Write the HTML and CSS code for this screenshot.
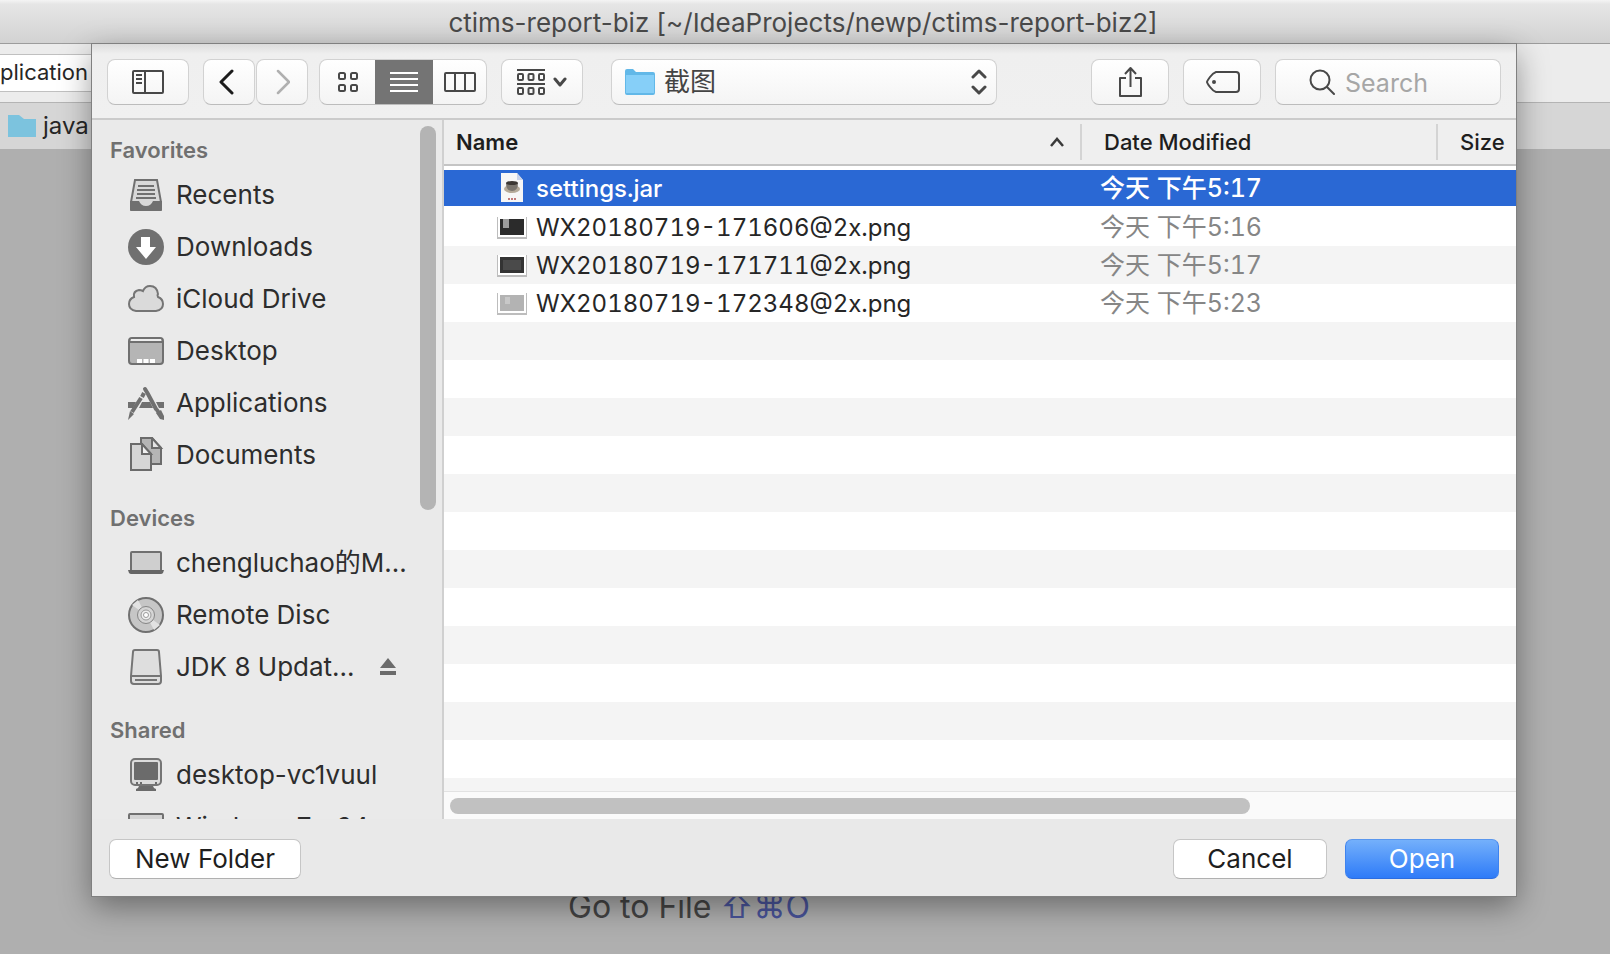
FILE: index.html
```html
<!DOCTYPE html>
<html lang="en">
<head>
<meta charset="utf-8">
<title>ctims-report-biz</title>
<link rel="stylesheet" href="styles.css">
</head>
<body>
<div class="app">
  <header class="titlebar">ctims-report-biz [~/IdeaProjects/newp/ctims-report-biz2]</header>
  <div class="app-tools"><div class="run-config">plication</div></div>
  <nav class="crumbs">
    <svg width="28" height="22" viewBox="0 0 28 22" aria-hidden="true"><path fill="#7cc3de" d="M0 0h11l5 4h12v18H0z"/></svg>
    <span>java</span>
  </nav>
  <main class="editor"><p class="hint">Go to File <kbd>⇧⌘O</kbd></p></main>
</div>

<section class="dialog" role="dialog" aria-label="Open">
  <div class="toolbar">
    <button class="btn btn-side" aria-label="Toggle sidebar">
      <svg width="32" height="24" viewBox="0 0 32 24" fill="none" stroke="#484848" stroke-width="2"><rect x="1" y="1" width="30" height="22" rx="1"/><path d="M13 1v22M4 5h6M4 9h6M4 13h6"/></svg>
    </button>
    <div class="pair">
      <button class="btn btn-nav" aria-label="Back"><svg width="20" height="26" viewBox="0 0 20 26" fill="none" stroke="#1c1c1c" stroke-width="3" stroke-linecap="round" stroke-linejoin="round"><path d="M13 2 2 13l11 11"/></svg></button>
      <button class="btn btn-nav" aria-label="Forward" disabled><svg width="16" height="26" viewBox="0 0 16 26" fill="none" stroke="#b0b0b0" stroke-width="2.5" stroke-linecap="round" stroke-linejoin="round"><path d="m4 2 11 11L4 24"/></svg></button>
    </div>
    <div class="views">
      <button class="view view-icons" aria-label="Icons"><svg width="22" height="22" viewBox="0 0 22 22" fill="none" stroke="#484848" stroke-width="2"><rect x="2" y="2" width="6" height="6" rx="1.5"/><rect x="14" y="2" width="6" height="6" rx="1.5"/><rect x="2" y="14" width="6" height="6" rx="1.5"/><rect x="14" y="14" width="6" height="6" rx="1.5"/></svg></button>
      <button class="view view-on" aria-label="List" aria-pressed="true"><svg width="28" height="20" viewBox="0 0 28 20" stroke="#fff" stroke-width="2"><path d="M0 1h28M0 7h28M0 13h28M0 19h28"/></svg></button>
      <button class="view" aria-label="Columns"><svg width="32" height="20" viewBox="0 0 32 20" fill="none" stroke="#484848" stroke-width="2"><rect x="1" y="1" width="30" height="18" rx="1"/><path d="M11 1v18M21 1v18"/></svg></button>
    </div>
    <button class="btn btn-group" aria-label="Group by">
      <svg width="28" height="28" viewBox="0 0 28 28" fill="none" stroke="#484848" stroke-width="2"><path d="M0 2h28M0 16h28"/><rect x="1" y="6" width="5" height="6" rx="1"/><rect x="11.500" y="6" width="5" height="6" rx="1"/><rect x="22" y="6" width="5" height="6" rx="1"/><rect x="1" y="20" width="5" height="6" rx="1"/><rect x="11.500" y="20" width="5" height="6" rx="1"/><rect x="22" y="20" width="5" height="6" rx="1"/></svg>
      <svg width="14" height="10" viewBox="0 0 14 10" fill="none" stroke="#484848" stroke-width="3" stroke-linecap="round" stroke-linejoin="round"><path d="m2 2 5 6 5-6"/></svg>
    </button>
    <div class="path">
      <svg width="30" height="26" viewBox="0 0 30 26" aria-hidden="true"><path fill="#62b8e8" d="M0 2q0-2 2-2h6l3 3h17q2 0 2 2v19q0 2-2 2H2q-2 0-2-2z"/><path fill="#86cff8" d="M1 6h28v18H1z"/></svg>
      <select aria-label="Folder"><option>截图</option></select>
      <svg width="16" height="26" viewBox="0 0 16 26" fill="none" stroke="#484848" stroke-width="3" stroke-linecap="round" stroke-linejoin="round" aria-hidden="true"><path d="m2 8 6-6 6 6M2 18l6 6 6-6"/></svg>
    </div>
    <button class="btn btn-tool" aria-label="Share"><svg width="24" height="32" viewBox="0 0 24 32" fill="none" stroke="#484848" stroke-width="2" stroke-linejoin="round"><path d="M8 12H2v18h21V12h-6M12.500 21V2M7 8l5.500-6L18 8"/></svg></button>
    <button class="btn btn-tool" aria-label="Tags"><svg width="36" height="22" viewBox="0 0 36 22" fill="none" stroke="#484848" stroke-width="2" stroke-linejoin="round"><path d="M12 1h20q3 0 3 3v14q0 3-3 3H12q-3-1-6-5-3-4-3-5 0-1 3-5 3-4 6-5z"/><circle cx="10" cy="11" r="2" fill="#484848" stroke="none"/></svg></button>
    <label class="search">
      <svg width="26" height="28" viewBox="0 0 26 28" fill="none" stroke="#484848" stroke-width="2" stroke-linecap="round"><circle cx="11" cy="12" r="9.500"/><path d="m18 19 7 7"/></svg>
      <input type="text" placeholder="Search" aria-label="Search">
    </label>
  </div>

  <div class="body">
    <aside class="sidebar">
      <div class="places">
        <h2>Favorites</h2>
        <a href="#"><svg class="ico" viewBox="0 0 36 36"><path fill="#d8d8d8" stroke="#707070" stroke-width="2" d="M7 3h22l4 22v7q0 1-1 1H4q-1 0-1-1v-7z"/><path stroke="#707070" stroke-width="2" d="M10 9h16M9 13h18M9 17h18M8 21h20"/><path fill="#707070" d="M2 24h9q2 5 7 5t7-5h9v9q0 1-1 1H3q-1 0-1-1z"/></svg><span>Recents</span></a>
        <a href="#"><svg class="ico" viewBox="0 0 36 36"><circle cx="18" cy="18" r="18" fill="#707070"/><path fill="#fff" d="M13 8h9v10h6L18 30 8 18h5z"/></svg><span>Downloads</span></a>
        <a href="#"><svg class="ico" viewBox="0 0 36 36"><path fill="#dadada" stroke="#757575" stroke-width="2" d="M8 30q-7-1-7-7 0-5 5-7-1-6 5-7 2 0 4 1 2-5 7-5 7 0 8 8-1 1 0 3 5 2 5 7 0 6-7 7z"/></svg><span>iCloud Drive</span></a>
        <a href="#"><svg class="ico" viewBox="0 0 36 36"><rect x="1" y="5" width="34" height="26" rx="3" fill="#b5b5b5" stroke="#707070" stroke-width="2"/><path fill="#eee" d="M3 6h30v3H3z"/><path stroke="#707070" stroke-width="2" d="M2 9h32"/><path fill="#fff" d="M9 26h5v4H9zM15.500 26h5v4h-5zM22 26h5v4h-5z"/></svg><span>Desktop</span></a>
        <a href="#"><svg class="ico" viewBox="0 0 36 36"><path fill="#707070" d="M0 17h8l-3 6H0zM14 17h8l3 6H11zM28 17h8v6h-5z"/><g fill="none" stroke="#707070" stroke-width="4"><path d="M17 4l3 5 8 15M29 25l2 3" stroke-linecap="round"/><path d="M16 8l-2 4M13 13 4 27"/></g><path fill="#707070" d="m2 26 4 3-6 6zM28 28l5-3 3 6v4l-4-1z"/></svg><span>Applications</span></a>
        <a href="#"><svg class="ico" viewBox="0 0 36 36" stroke="#6b6b6b" stroke-width="2"><path fill="#b5b5b5" d="M13 1h11l9 10v16H13z"/><path fill="#e5e5e5" d="M24 1v10h9z"/><path fill="#d6d6d6" d="M3 7h11l9 10v16H3z"/><path fill="#f0f0f0" d="M14 7v10h9z"/></svg><span>Documents</span></a>
        <h2>Devices</h2>
        <a href="#"><svg class="ico" viewBox="0 0 36 36"><rect x="3" y="7" width="30" height="19" rx="1" fill="#cfcfcf" stroke="#707070" stroke-width="2"/><path fill="#666" d="M0 25h36l-1 3q-1 1-2 1H3q-1 0-2-1z"/></svg><span>chengluchao的M...</span></a>
        <a href="#"><svg class="ico" viewBox="0 0 36 36" fill="none"><circle cx="18" cy="18" r="17" fill="#c6c6c6" stroke="#707070" stroke-width="2"/><path fill="#e2e2e2" d="M18 18 4 8l6-5zM18 18l14 10-6 5z"/><circle cx="18" cy="18" r="8.500" fill="#d5d5d5" stroke="#858585"/><circle cx="18" cy="18" r="5" fill="#eee" stroke="#999"/><circle cx="18" cy="18" r="2.500" fill="#fff" stroke="#999"/></svg><span>Remote Disc</span></a>
        <a href="#"><svg class="ico" viewBox="0 0 36 36"><path fill="#dedede" stroke="#757575" stroke-width="2" d="M7 1h22q2 0 2 2l2 24v5q0 3-3 3H6q-3 0-3-3v-5L5 3q0-2 2-2z"/><path fill="none" stroke="#757575" stroke-width="2" d="M4 27h28M7 31h22"/></svg><span class="fill">JDK 8 Updat...</span><svg class="eject" width="16" height="18" viewBox="0 0 16 18" fill="#6b6b6b"><path d="m8 0 8 10H0zM0 13h16v4H0z"/></svg></a>
        <h2>Shared</h2>
        <a href="#"><svg class="ico" viewBox="0 0 36 36"><rect x="3" y="2" width="30" height="26" rx="4" fill="#dcdcdc" stroke="#757575" stroke-width="2"/><rect x="6" y="5" width="24" height="18" rx="1" fill="#6b6b6b"/><path fill="#6b6b6b" d="M8 25h2v2H8zM12 25h2v2h-2zM27 25h2v2h-2zM11 29h14l1 2 2 1v2H8v-2l2-1z"/></svg><span>desktop-vc1vuul</span></a>
        <a href="#"><svg class="ico" viewBox="0 0 36 36"><rect x="1" y="5" width="34" height="24" rx="1" fill="#d4d4d4" stroke="#707070" stroke-width="2"/></svg><span>Windows 7 x64</span></a>
      </div>
      <div class="vtrack"><div class="vthumb"></div></div>
    </aside>

    <div class="files">
      <div class="listing">
        <table>
          <colgroup><col><col class="c-date"><col class="c-size"></colgroup>
          <thead>
            <tr>
              <th class="h-name" aria-sort="ascending"><div class="th">Name <svg width="16" height="10" viewBox="0 0 16 10" fill="none" stroke="#3a3a3a" stroke-width="2.500"><path d="m2 9 6-7 6 7"/></svg></div></th>
              <th><div class="th">Date Modified</div></th>
              <th><div class="th">Size</div></th>
            </tr>
          </thead>
          <tbody>
            <tr class="sel">
              <td><div class="file"><svg width="30" height="30" viewBox="0 0 30 30"><path fill="#f6f6f6" d="M4 0h16l6 7v22H4z"/><path fill="#c9d3ea" d="M20 0v7h6z"/><ellipse cx="15" cy="16" rx="8" ry="4" fill="#b5aa99"/><path fill="#7a756e" d="M9 10h12q0 8-6 8t-6-8z"/><ellipse cx="15" cy="10" rx="6" ry="2" fill="#3b3733"/><path stroke="#c07a7a" stroke-width="2" stroke-dasharray="2 1" d="M11 26h8"/></svg><span>settings.jar</span></div></td>
              <td>今天 下午5:17</td><td></td>
            </tr>
            <tr>
              <td><div class="file"><svg width="30" height="30" viewBox="0 0 30 30"><path fill="#bdbdbd" d="M0 5h30v22H0z"/><path fill="#fff" d="M1 5h28v20H1z"/><path fill="#2b2b2b" d="M3 7h24v16H3z"/><path fill="#9c9c9c" d="M6 7h6v9H6z"/></svg><span>WX20180719-171606@2x.png</span></div></td>
              <td>今天 下午5:16</td><td></td>
            </tr>
            <tr>
              <td><div class="file"><svg width="30" height="30" viewBox="0 0 30 30"><path fill="#bdbdbd" d="M0 5h30v22H0z"/><path fill="#fff" d="M1 5h28v20H1z"/><path fill="#333" d="M3 7h24v16H3z"/><path fill="#4a4a4a" d="M6 10h18v10H6z"/></svg><span>WX20180719-171711@2x.png</span></div></td>
              <td>今天 下午5:17</td><td></td>
            </tr>
            <tr>
              <td><div class="file"><svg width="30" height="30" viewBox="0 0 30 30"><path fill="#bdbdbd" d="M0 5h30v22H0z"/><path fill="#fff" d="M1 5h28v20H1z"/><path fill="#b3b3b3" d="M3 7h24v16H3z"/><path fill="#c8c8c8" d="M8 9h5v7H8z"/></svg><span>WX20180719-172348@2x.png</span></div></td>
              <td>今天 下午5:23</td><td></td>
            </tr>
          </tbody>
        </table>
        <div class="stripes"></div>
      </div>
      <div class="htrack"><div class="hthumb"></div></div>
    </div>
  </div>

  <footer class="actions">
    <button class="act act-new">New Folder</button>
    <button class="act">Cancel</button>
    <button class="act act-open">Open</button>
  </footer>
</section>
</body>
</html>
```
FILE: styles.css
```css
* { box-sizing: border-box; }
html, body { height: 100%; }
body {
  margin: 0;
  overflow: hidden;
  position: relative;
  font: 26px/32px Inter, "Noto Sans CJK SC", sans-serif;
  color: #262626;
}
button, input, select { font: inherit; color: inherit; margin: 0; padding: 0; }
svg { flex: none; display: block; }

/* Window behind the dialog */
.app { height: 100%; display: flex; flex-direction: column; background: #afafaf; }
.titlebar {
  height: 44px;
  padding-top: 7px;
  padding-right: 4px;
  text-align: center;
  color: #4a4a4a;
  background: linear-gradient(#f4f4f4, #e6e6e6 4px, #d2d2d2);
  border-bottom: 1px solid #9c9c9c;
}
.app-tools { height: 59px; padding-top: 10px; background: #ececec; border-bottom: 1px solid #b4b4b4; }
.run-config {
  width: 160px;
  height: 38px;
  line-height: 34px;
  font-size: 22px;
  background: #fff;
  border: 1px solid #c0c0c0;
  border-left: 0;
}
.crumbs { height: 46px; display: flex; align-items: center; gap: 7px; padding-left: 8px; font-size: 24px; background: #d6d6d6; }
.editor { flex: 1; display: flex; align-items: flex-end; padding: 0 0 28px 568px; }
.hint { margin: 0; font-size: 32px; line-height: 38px; color: #444; white-space: nowrap; }
.hint kbd { font: inherit; font-family: Inter, "DejaVu Sans", sans-serif; color: #49549a; }

/* Open dialog */
.dialog {
  position: absolute;
  inset: 44px 94px 58px 92px;
  display: flex;
  flex-direction: column;
  background: #e9e9e9;
  box-shadow: 0 0 0 1px #808080, 0 10px 30px rgba(0, 0, 0, .4);
}
.toolbar {
  height: 76px;
  display: flex;
  align-items: flex-start;
  padding: 15px 15px 0;
  background: linear-gradient(#dcdcdc, #efefef 10px, #f0f0f0);
  border-bottom: 2px solid #cbcbcb;
}
.btn, .views, .path, .search {
  height: 46px;
  display: flex;
  align-items: center;
  justify-content: center;
  background: linear-gradient(#fff, #f4f4f4);
  border: 1px solid #d2d2d2;
  border-bottom-color: #bcbcbc;
  border-radius: 8px;
}
.btn-side { width: 82px; }
.pair { display: flex; gap: 1px; margin-left: 14px; }
.btn-nav { width: 52px; }
.views { width: 168px; margin-left: 11px; overflow: hidden; }
.view { flex: 1; height: 100%; display: flex; align-items: center; justify-content: center; border: 0; background: none; }
.view-icons { flex: 0 0 55px; }
.view-on { flex: 0 0 58px; background: #747474; }
.btn-group { width: 82px; gap: 8px; margin-left: 14px; }
.path { flex: 1; max-width: 386px; margin: 0 auto 0 28px; padding: 0 9px 0 13px; gap: 9px; }
.path select { flex: 1; min-width: 0; height: 40px; appearance: none; border: 0; background: none; color: #444; font-size: 26px; }
.btn-tool { width: 78px; margin-right: 14px; }
.search { width: 226px; justify-content: flex-start; gap: 10px; padding-left: 33px; }
.search input { flex: 1; min-width: 0; height: 44px; padding-top: 2px; border: 0; background: none; font-size: 25px; }
.search input::placeholder { color: #a6a6a6; opacity: 1; }

.body { flex: 1; min-height: 0; display: flex; }
.sidebar { width: 352px; display: flex; overflow: hidden; background: #eaeaea; border-right: 2px solid #d0d0d0; }
.places { flex: 1; min-width: 0; padding: 11px 0 0 18px; }
.places h2 { margin: 18px 0 0; font-size: 22px; line-height: 38px; font-weight: 600; color: #707070; }
.places h2:first-child { margin-top: 0; }
.places a { display: flex; align-items: center; height: 52px; padding-left: 18px; gap: 12px; color: #2d2d2d; text-decoration: none; white-space: nowrap; }
.ico { width: 36px; height: 36px; }
.fill { flex: 1; }
.eject { margin-right: 24px; }
.vtrack { width: 22px; padding: 6px 6px 0 0; }
.vthumb { height: 384px; border-radius: 8px; background: #b4b4b4; }

.files { flex: 1; min-width: 0; display: flex; flex-direction: column; background: #fff; }
.listing { flex: 1; min-height: 0; overflow: hidden; display: flex; flex-direction: column; }
table { width: 100%; table-layout: fixed; border-collapse: separate; border-spacing: 0; }
.c-date { width: 356px; }
.c-size { width: 80px; }
th { height: 46px; padding: 0; background: #efefef; border-bottom: 2px solid #c4c4c4; font-size: 22px; font-weight: 500; text-align: left; color: #1e1e1e; }
.th { height: 36px; display: flex; align-items: center; justify-content: space-between; padding: 0 15px 0 22px; border-left: 2px solid #d4d4d4; white-space: nowrap; }
.h-name { font-weight: 600; }
.h-name .th { border-left: 0; padding-left: 12px; }
tbody::before { content: ""; display: block; height: 4px; }
td { height: 38px; padding: 0 0 0 20px; font-size: 25px; line-height: 36px; white-space: nowrap; font-variant-numeric: tabular-nums; color: #868686; }
td:first-child { padding-left: 53px; font-size: 24px; color: #262626; }
.file { display: flex; align-items: center; gap: 9px; height: 36px; }
.file span { line-height: 32px; padding-top: 2px; }
.sel td, .sel td:first-child { color: #fff; background: #2a68d4; border-bottom: 2px solid #fff; }
.sel td { font-weight: 500; }
tbody tr:nth-child(odd):not(.sel) td { background: #f4f4f4; }
.stripes { flex: 1; background: repeating-linear-gradient(#f4f4f4 0 38px, #fff 38px 76px); }
.htrack { height: 28px; padding: 6px; background: #fafafa; border-top: 1px solid #e2e2e2; }
.hthumb { width: 75.5%; height: 16px; border-radius: 8px; background: #c1c1c1; }

.actions { height: 77px; display: flex; gap: 18px; padding: 20px 17px 0; }
.act { width: 154px; height: 40px; font-size: 26px; line-height: 36px; color: #1e1e1e; background: #fff; border: 1px solid #c6c6c6; border-bottom-color: #b0b0b0; border-radius: 7px; }
.act-new { width: 192px; margin-right: auto; }
.act-open { color: #fff; background: linear-gradient(#74b0fb, #2e7bf8); border-color: #5a97ee #3f83ee #2c6de0; }
```
